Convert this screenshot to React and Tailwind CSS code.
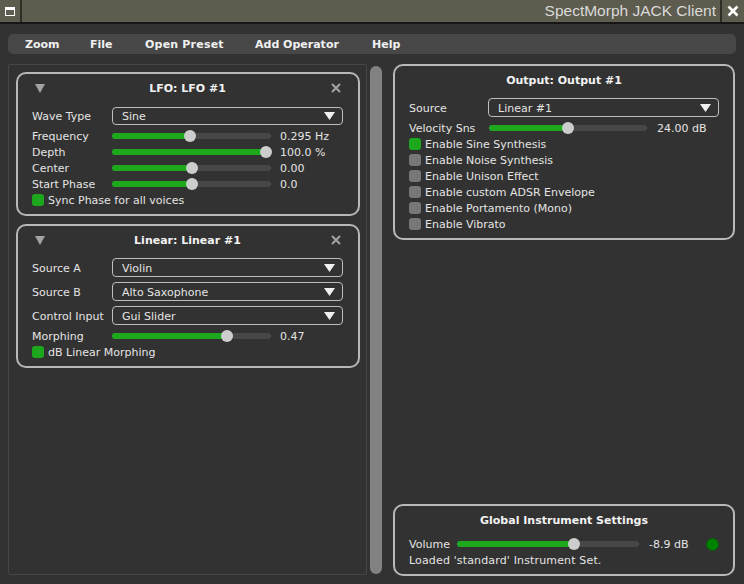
import React from "react";

const Slider = ({ width, pos }) => (
  <div className={`relative h-[12px] shrink-0 ${width}`}>
    <div className="absolute left-0 right-0 top-[3px] h-[6px] rounded-full bg-[#474747]" />
    <div className="absolute left-0 top-[3px] h-[6px] rounded-full bg-[#1ca71c]" style={{ width: pos }} />
    <div className="absolute top-0 h-[12px] w-[12px] rounded-full bg-[#cdcdcd]" style={{ left: pos - 6 }} />
  </div>
);

const Combo = ({ text, tall }) => (
  <div className={`flex flex-1 items-center justify-between rounded-[4px] border border-[#bdbdbd] pl-[9px] pr-[7px] ${tall ? "h-[19px]" : "h-[18px]"}`}>
    <span className="pt-[2px]">{text}</span>
    <svg width="11" height="8" viewBox="0 0 11 8">
      <path d="M0 0 H11 L5.5 8 Z" fill="#f0f0f0" />
    </svg>
  </div>
);

const Check = ({ on, label }) => (
  <div className="flex h-[16px] items-center gap-[4px]">
    <div className={`h-[12px] w-[12px] rounded-[3px] ${on ? "bg-[#1ca71c]" : "bg-[#777777]"}`} />
    <span className="pt-[2px]">{label}</span>
  </div>
);

const Header = ({ title }) => (
  <div className="flex h-[20px] items-center pl-[17px] pr-[16px]">
    <svg width="10" height="9" viewBox="0 0 10 9">
      <path d="M0 0 H10 L5 9 Z" fill="#a3a3a3" />
    </svg>
    <div className="flex-1 pt-[2px] text-center font-bold text-[#f2f2f2]">{title}</div>
    <svg width="12" height="12" viewBox="0 0 12 12">
      <path d="M2 2 L10 10 M10 2 L2 10" stroke="#a3a3a3" strokeWidth="2" />
    </svg>
  </div>
);

const SliderRow = ({ label, labelW, width, pos, value, gap }) => (
  <div className="flex h-[16px] items-center">
    <span className={`shrink-0 pt-[2px] ${labelW}`}>{label}</span>
    <Slider width={width} pos={pos} />
    <span className={`pt-[2px] ${gap}`}>{value}</span>
  </div>
);

export default function App() {
  return (
    <div className="flex h-[584px] w-[744px] flex-col overflow-hidden bg-[#323232] font-['DejaVu_Sans',sans-serif] text-[11px] leading-[14px] text-[#e4e4e4]">
      {/* window title bar */}
      <div className="flex h-[24px] shrink-0 border-b-2 border-[#161616] bg-[#5d5c4e]">
        <div className="flex w-[22px] items-center justify-center border-r-2 border-[#2e2d26]">
          <div className="h-[9px] w-[10px] border border-t-[3px] border-white" />
        </div>
        <div className="flex flex-1 items-center justify-end pr-[4px] font-['Liberation_Sans',sans-serif] text-[15.5px] text-[#dadada]">
          SpectMorph JACK Client
        </div>
        <div className="flex w-[24px] items-center justify-center border-l-2 border-[#2e2d26]">
          <svg width="12" height="12" viewBox="0 0 12 12">
            <path d="M1.5 1.5 L10.5 10.5 M10.5 1.5 L1.5 10.5" stroke="#ffffff" strokeWidth="2.6" />
          </svg>
        </div>
      </div>

      <div className="flex flex-col px-[8px] pt-[10px]">
        {/* menu bar */}
        <div className="flex h-[20px] items-center rounded-[5px] bg-[#474747] pl-[17px] font-bold text-[#f0f0f0]">
          <span className="w-[65px] pt-[2px]">Zoom</span>
          <span className="w-[55px] pt-[2px]">File</span>
          <span className="w-[110px] pt-[2px] tracking-[0.2px]">Open Preset</span>
          <span className="w-[117px] pt-[2px]">Add Operator</span>
          <span className="pt-[2px]">Help</span>
        </div>

        <div className="mt-[10px] flex h-[512px]">
          {/* operator scroll area */}
          <div className="flex h-[511px] w-[359px] shrink-0 flex-col gap-[8px] rounded-[2px] border border-[#464646] pl-[7px] pr-[6px] pt-[7px]">
            <div className="flex flex-col rounded-[10px] border-2 border-[#b8b8b8] pb-[6px] pt-[4px]">
              <Header title="LFO: LFO #1" />
              <div className="mt-[9px] flex items-center pl-[14px] pr-[15px]">
                <span className="w-[80px] shrink-0 pt-[2px]">Wave Type</span>
                <Combo text="Sine" />
              </div>
              <div className="mt-[3px] flex flex-col pl-[14px]">
                <SliderRow label="Frequency" labelW="w-[80px]" width="w-[159px]" pos={78} value="0.295 Hz" gap="ml-[9px]" />
                <SliderRow label="Depth" labelW="w-[80px]" width="w-[159px]" pos={154} value="100.0 %" gap="ml-[9px]" />
                <SliderRow label="Center" labelW="w-[80px]" width="w-[159px]" pos={80} value="0.00" gap="ml-[9px]" />
                <SliderRow label="Start Phase" labelW="w-[80px]" width="w-[159px]" pos={80} value="0.0" gap="ml-[9px]" />
                <Check on label="Sync Phase for all voices" />
              </div>
            </div>

            <div className="flex flex-col rounded-[10px] border-2 border-[#b8b8b8] pb-[6px] pt-[4px]">
              <Header title="Linear: Linear #1" />
              <div className="mt-[8px] flex flex-col gap-[5px] pl-[14px] pr-[15px]">
                <div className="flex items-center">
                  <span className="w-[80px] shrink-0 pt-[2px]">Source A</span>
                  <Combo tall text="Violin" />
                </div>
                <div className="flex items-center">
                  <span className="w-[80px] shrink-0 pt-[2px]">Source B</span>
                  <Combo tall text="Alto Saxophone" />
                </div>
                <div className="flex items-center">
                  <span className="w-[80px] shrink-0 pt-[2px]">Control Input</span>
                  <Combo tall text="Gui Slider" />
                </div>
              </div>
              <div className="mt-[3px] flex flex-col pl-[14px]">
                <SliderRow label="Morphing" labelW="w-[80px]" width="w-[159px]" pos={115} value="0.47" gap="ml-[9px]" />
                <Check on label="dB Linear Morphing" />
              </div>
            </div>
          </div>

          {/* scrollbar */}
          <div className="my-[2px] ml-[3px] w-[12px] shrink-0 rounded-full bg-[#828282]" />

          {/* right column */}
          <div className="ml-[11px] flex w-[342px] shrink-0 flex-col justify-between">
            <div className="flex flex-col rounded-[10px] border-2 border-[#b8b8b8] pb-[6px] pt-[4px]">
              <div className="flex h-[20px] items-center justify-center pt-[2px] font-bold text-[#f2f2f2]">Output: Output #1</div>
              <div className="mt-[8px] flex items-center pl-[14px] pr-[14px]">
                <span className="w-[79px] shrink-0 pt-[2px]">Source</span>
                <Combo tall text="Linear #1" />
              </div>
              <div className="mt-[3px] flex flex-col pl-[14px]">
                <SliderRow label="Velocity Sns" labelW="w-[80px]" width="w-[158px]" pos={79} value="24.00 dB" gap="ml-[10px]" />
                <Check on label="Enable Sine Synthesis" />
                <Check label="Enable Noise Synthesis" />
                <Check label="Enable Unison Effect" />
                <Check label="Enable custom ADSR Envelope" />
                <Check label="Enable Portamento (Mono)" />
                <Check label="Enable Vibrato" />
              </div>
            </div>

            <div className="flex flex-col rounded-[10px] border-2 border-[#b8b8b8] pb-[6px] pt-[4px]">
              <div className="flex h-[20px] items-center justify-center pt-[2px] font-bold text-[#f2f2f2]">Global Instrument Settings</div>
              <div className="mt-[6px] flex flex-col pl-[14px] pr-[14px]">
                <div className="flex h-[16px] items-center">
                  <span className="w-[48px] shrink-0 pt-[2px]">Volume</span>
                  <Slider width="w-[182px]" pos={117} />
                  <span className="ml-[10px] pt-[2px]">-8.9 dB</span>
                  <div className="ml-auto h-[13px] w-[13px] rounded-full border border-[#0a5a0a] bg-[#008200]" />
                </div>
                <div className="flex h-[16px] items-center pt-[2px] tracking-[0.15px]">Loaded 'standard' Instrument Set.</div>
              </div>
            </div>
          </div>
        </div>
      </div>
    </div>
  );
}
